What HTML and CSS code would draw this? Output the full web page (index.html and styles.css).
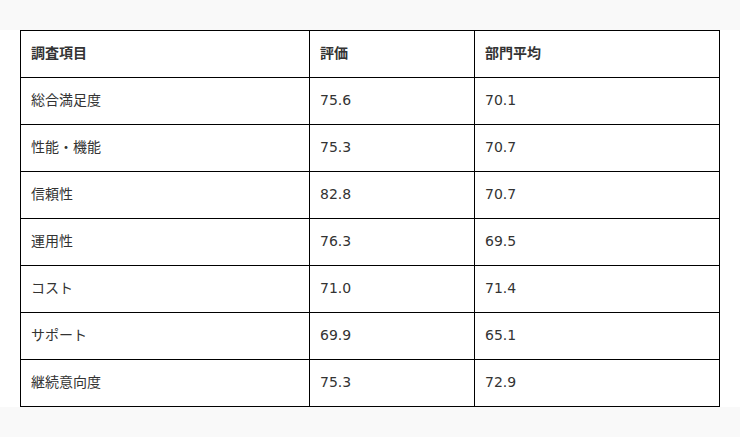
FILE: index.html
```html
<!DOCTYPE html>
<html lang="ja">
<head>
<meta charset="utf-8">
<link rel="stylesheet" href="styles.css">
</head>
<body>
<div class="panel">
<table class="data">
<colgroup><col class="c1"><col class="c2"><col class="c3"></colgroup>
<thead>
<tr><th>調査項目</th><th>評価</th><th>部門平均</th></tr>
</thead>
<tbody>
<tr><td>総合満足度</td><td>75.6</td><td>70.1</td></tr>
<tr><td>性能・機能</td><td>75.3</td><td>70.7</td></tr>
<tr><td>信頼性</td><td>82.8</td><td>70.7</td></tr>
<tr><td>運用性</td><td>76.3</td><td>69.5</td></tr>
<tr><td>コスト</td><td>71.0</td><td>71.4</td></tr>
<tr><td>サポート</td><td>69.9</td><td>65.1</td></tr>
<tr><td>継続意向度</td><td>75.3</td><td>72.9</td></tr>
</tbody>
</table>
</div>
</body>
</html>
```
FILE: styles.css
```css
html, body {
  margin: 0;
  padding: 0;
  background: #f9f9f9;
}
body {
  padding-top: 30px;
  font-family: "DejaVu Sans", "Noto Sans CJK JP", sans-serif;
  font-size: 14px;
  color: #333;
}
.panel {
  background: #fff;
  padding: 0 20px;
}
.data {
  width: 699px;
  border-collapse: collapse;
  table-layout: fixed;
}
.c1 { width: 289px; }
.c2 { width: 165px; }
.c3 { width: 245px; }
.data th, .data td {
  border: 1px solid #000;
  height: 47px;
  padding: 0 10px 2px;
  text-align: left;
  vertical-align: middle;
  box-sizing: border-box;
  line-height: 16px;
}
.data th {
  font-weight: bold;
}
```
